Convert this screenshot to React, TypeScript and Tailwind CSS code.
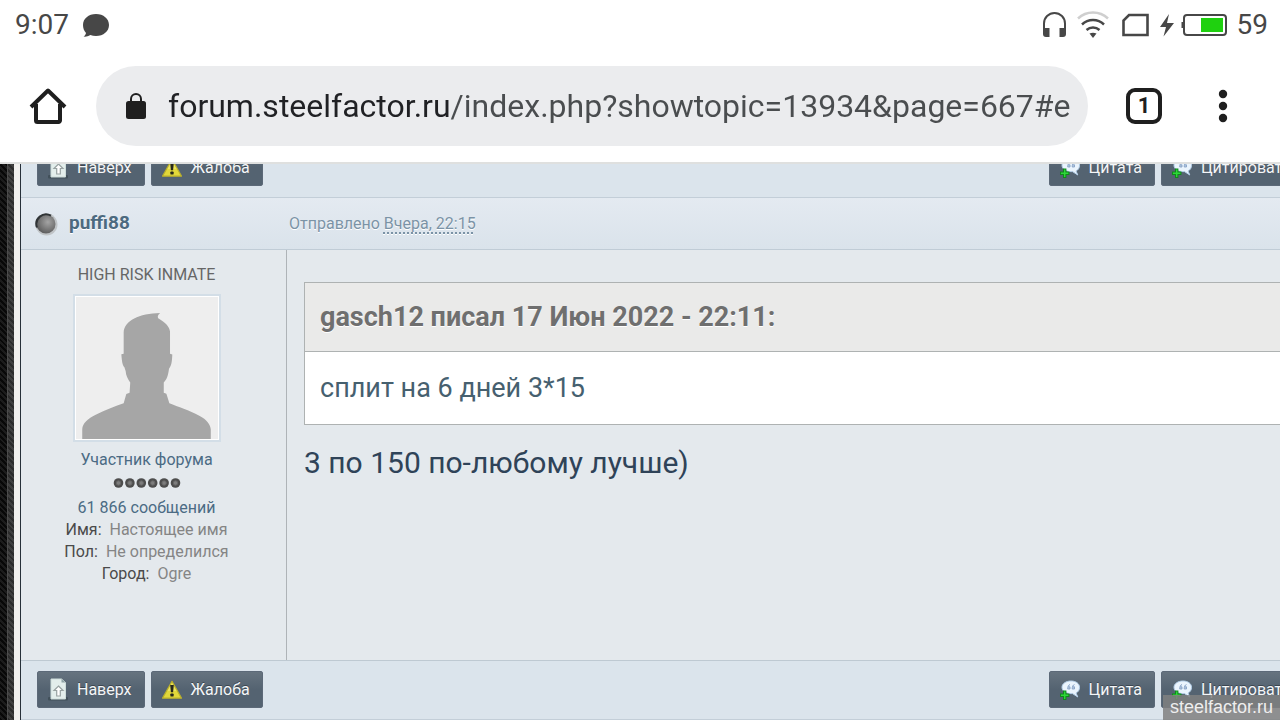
import type { ReactNode } from 'react';

const DocumentUpIcon = () => (
  <svg width="20" height="24" viewBox="0 0 20 24" aria-hidden="true">
    <rect x="0" y="19" width="20" height="3.500" rx="1" fill="#35454b" opacity="0.6" />
    <path d="M3 1h10.500l4 3.500V21H3z" fill="#e3eeec" stroke="#cddcda" strokeWidth="1" />
    <path d="M13.500 1l4 3.500h-4z" fill="#8fa3a6" />
    <path d="M10.500 8l4.500 4.500h-2.700V18H8.700v-5.500H6z" fill="#ffffff" stroke="#98a2a2" strokeWidth="1.200" />
  </svg>
);

const WarningIcon = () => (
  <svg width="20" height="24" viewBox="0 0 22 24" aria-hidden="true">
    <path d="M11 2.500L21.500 21H.5z" fill="#e2d83a" stroke="#b9af2c" strokeWidth="1.300" strokeLinejoin="round" />
    <path d="M11 4L16 13H6z" fill="#f3ec7a" opacity="0.6" />
    <path d="M9 6.500h4l-.8 8H9.800z" fill="#26281c" />
    <rect x="9.200" y="15.800" width="3.600" height="3.400" rx="1" fill="#26281c" />
  </svg>
);

const QuoteIcon = () => (
  <svg width="20" height="24" viewBox="0 0 20 24" aria-hidden="true">
    <path
      d="M11 3c5 0 8.500 2.600 8.500 6.300 0 2.800-1.300 4.700-3.500 5.700l1.800 4-5.300-3.400H11C6 15.600 2 13 2 9.300S6 3 11 3z"
      fill="#eaf4fd"
      stroke="#b4cfe9"
      strokeWidth="1"
    />
    <path
      d="M10 6.500C8.500 7 7.700 8.200 7.700 11H10V8.800H8.500M14.500 6.500c-1.500.5-2.300 1.700-2.300 4.500h2.300V8.800H13"
      fill="#b9cbe2"
      stroke="#7f9cc2"
      strokeWidth="0.8"
    />
    <path d="M3 12.500h3.400v3h3v3.400h-3v3H3v-3H0v-3.400h3z" fill="#0f8a1a" />
    <path d="M4 13.500h1.400v3h3v1.400h-3v3H4v-3H1v-1.400h3z" fill="#2fd63a" />
  </svg>
);

const Avatar = () => (
  <svg className="block h-full w-full" viewBox="0 0 432 432" role="img" aria-label="puffi88">
    <rect width="432" height="432" fill="#eeeeee" />
    <path
      d="M19 432V402C20 384 36 370 60 358C90 343 120 332 145 323L153 295L163 291L165 260C158 250 152 240 151 225L147 213C142 208 140 200 138 174L145 173V108C147 72 192 50 256 49C250 54 247 59 250 65C270 76 284 90 286 105V173L293 175C292 200 290 208 283 218C280 240 276 250 267 260V291L275 294L284 323C310 334 345 344 375 361C398 373 409 388 410 402V432Z"
      fill="#a6a6a6"
    />
  </svg>
);

interface ActionProps {
  icon: ReactNode;
  children: ReactNode;
}

const Action = ({ icon, children }: ActionProps) => (
  <button
    type="button"
    className="flex h-[37px] shrink-0 items-center gap-[9px] rounded-xs border border-[#5c6978] bg-linear-to-b from-[#66737f] to-[#546371] to-50% pr-3 pl-[10px] text-base whitespace-nowrap text-[#f4f6f8] [text-shadow:0_-1px_0_#3c4650]"
  >
    {icon}
    {children}
  </button>
);

const ActionBar = () => (
  <div className="flex items-center gap-[6px] border-b border-[#c3ced8] bg-[#dbe4ec] pt-[10px] pb-[11px] pl-4">
    <Action icon={<DocumentUpIcon />}>Наверх</Action>
    <Action icon={<WarningIcon />}>Жалоба</Action>
    <div className="flex-1" />
    {/* the forum page is wider than the phone, so the last button runs off the edge */}
    <div className="-mr-6 flex gap-[6px]">
      <Action icon={<QuoteIcon />}>Цитата</Action>
      <Action icon={<QuoteIcon />}>Цитировать</Action>
    </div>
  </div>
);

const StatusBar = () => (
  <div className="flex h-[50px] items-center justify-between pr-3 pl-[15px] text-[28px] leading-8 text-[#474747]">
    <div className="flex items-center gap-[13px]">
      <span>9:07</span>
      <svg width="28" height="26" viewBox="0 0 28 26" aria-hidden="true">
        <path
          d="M14 2c7.500 0 13 4.700 13 11s-5.500 11-13 11c-2 0-4-.4-5.700-1C6 24.500 3.500 25 1.500 24.600c1.300-.8 2.300-2 2.500-3.600C2.100 19 1 16.200 1 13 1 6.700 6.500 2 14 2z"
          fill="#474747"
        />
      </svg>
    </div>
    <div className="flex items-center">
      <svg width="186" height="28" viewBox="0 0 186 28" aria-hidden="true">
        {/* headphones */}
        <path d="M2 18V12.500a10.500 10.500 0 0 1 21 0V18" fill="none" stroke="#474747" strokeWidth="2" />
        <path d="M1 17h6.500v9H4a3 3 0 0 1-3-3zM24 17h-6.500v9H21a3 3 0 0 0 3-3z" fill="#474747" />
        {/* wifi */}
        <g fill="none" strokeWidth="2.500">
          <path d="M36 7.500a22 22 0 0 1 30 0" stroke="#cfcfcf" />
          <path d="M40 13.500a16 16 0 0 1 22 0M44.500 19a10 10 0 0 1 13 0" stroke="#474747" />
        </g>
        <path d="M47.500 22.500q3.500-1.600 7 0L51 27z" fill="#474747" />
        {/* sim */}
        <path d="M87 4h18.500v20h-24V9.500z" fill="none" stroke="#474747" strokeWidth="2.600" />
        {/* charge */}
        <path d="M127 3L118 16h6l-2.500 9.500L132 12h-7z" fill="#474747" />
        {/* battery */}
        <rect x="142" y="4" width="42" height="20" rx="3" fill="none" stroke="#474747" strokeWidth="2" />
        <path d="M139.500 11h2v6h-2z" fill="#474747" />
        <rect x="159" y="7" width="22" height="14" fill="#1fd10f" />
      </svg>
      <span className="ml-[9px]">59</span>
    </div>
  </div>
);

const BrowserBar = () => (
  <div className="flex items-center pt-4 pb-4 text-[#1f1f1f]">
    <button type="button" aria-label="Home" className="flex w-24 justify-center">
      <svg width="38" height="40" viewBox="0 0 38 40" fill="none" stroke="currentColor" strokeWidth="4">
        <path d="M7 18v16.500a1.500 1.500 0 0 0 1.500 1.500h21a1.500 1.500 0 0 0 1.500-1.500V18" />
        <path d="M2 21L19 4.500 36 21" strokeLinejoin="round" />
      </svg>
    </button>
    <div className="flex h-20 min-w-0 flex-1 items-center gap-[22px] rounded-full bg-[#ebecee] pr-4 pl-[30px]">
      <svg width="20" height="28" viewBox="0 0 20 28" className="shrink-0" aria-hidden="true">
        <rect y="9" width="20" height="18" rx="2.500" fill="#1f1f1f" />
        <path d="M5 10V7a5 5 0 0 1 10 0v3" fill="none" stroke="#1f1f1f" strokeWidth="2" />
      </svg>
      {/* host is darker than the path */}
      <input
        type="text"
        aria-label="Address"
        defaultValue="forum.steelfactor.ru/index.php?showtopic=13934&page=667#e"
        className="h-[50px] min-w-0 flex-1 bg-[linear-gradient(90deg,#202124_282px,#4a4d4f_282px)] bg-clip-text text-[32px] text-transparent outline-none"
      />
    </div>
    <button type="button" aria-label="Tabs" className="ml-[38px] flex size-9 items-center justify-center rounded-[9px] border-4 border-[#1f1f1f] text-[22px] leading-6 font-bold">
      1
    </button>
    <button type="button" aria-label="Menu" className="flex w-[118px] justify-center pl-1">
      <svg width="10" height="34" viewBox="0 0 10 34" fill="currentColor">
        <circle cx="5" cy="5" r="4.200" />
        <circle cx="5" cy="17" r="4.200" />
        <circle cx="5" cy="29" r="4.200" />
      </svg>
    </button>
  </div>
);

const fields = [
  { label: 'Имя:', value: 'Настоящее имя' },
  { label: 'Пол:', value: 'Не определился' },
  { label: 'Город:', value: 'Ogre' },
];

const Author = () => (
  <aside className="flex w-[266px] shrink-0 flex-col items-center border-r border-[#aeb3b7] pt-[14px] pr-[14px] text-base leading-[22px]">
    <p className="text-[#666666]">HIGH RISK INMATE</p>
    <div className="mt-2 size-[148px] border-2 border-[#d3dee7] bg-white p-px">
      <Avatar />
    </div>
    <p className="mt-[7px] text-[#4b6b84]">Участник форума</p>
    <svg width="68" height="12" viewBox="0 0 68 12" className="mt-[6px] mb-2" aria-hidden="true">
      {[0, 1, 2, 3, 4, 5].map((i) => (
        <g key={i}>
          <circle cx={5.5 + i * 11.4} cy="6" r="4.800" fill="#4d4d4d" />
          <circle cx={5.5 + i * 11.4} cy="6" r="2.200" fill="#7d7d7d" stroke="#676767" />
        </g>
      ))}
    </svg>
    <p className="text-[#4b6b84]">61 866 сообщений</p>
    {fields.map((field) => (
      <p key={field.label} className="flex gap-2">
        <span className="text-[#4a4a4a]">{field.label}</span>
        <span className="text-[#858585]">{field.value}</span>
      </p>
    ))}
  </aside>
);

const Post = () => (
  <article className="flex flex-1 flex-col">
    <header className="flex h-[52px] items-center border-b border-[#c0ccd6] bg-linear-to-b from-[#e4eaf1] to-[#dae3eb] pl-[13px] [text-shadow:0_1px_0_#ffffff]">
      <svg width="24" height="24" viewBox="0 0 24 24" aria-hidden="true">
        <defs>
          <radialGradient id="offline" cx="0.6" cy="0.4" r="0.6">
            <stop offset="0" stopColor="#a4a4a4" />
            <stop offset="1" stopColor="#606060" />
          </radialGradient>
        </defs>
        <circle cx="12.500" cy="12.500" r="11" fill="#c0c4c7" />
        <circle cx="12" cy="12" r="9.500" fill="url(#offline)" />
        <path d="M3 15.500A9.700 9.700 0 0 1 17 3.700" fill="none" stroke="#303436" strokeWidth="2" />
      </svg>
      <a href="#puffi88" className="ml-[11px] w-[220px] text-[19px] font-bold text-[#4c6a7f]">
        puffi88
      </a>
      <p className="text-base text-[#7b93a6]">
        Отправлено{' '}
        <a href="#post" className="underline decoration-dotted decoration-2 underline-offset-4">
          Вчера, 22:15
        </a>
      </p>
    </header>
    <div className="flex flex-1 bg-[#e4e9ed]">
      <Author />
      <div className="min-w-0 flex-1 pt-8 pl-[17px]">
        <blockquote className="border-y border-l border-[#aeb2b2]">
          <p className="border-b border-[#aeb2b2] bg-[#eaeae9] px-[15px] py-4 text-[27px] leading-9 font-bold text-[#6f6f6f] [text-shadow:0_1px_0_#ffffff]">
            gasch12 писал 17 Июн 2022 - 22:11:
          </p>
          <p className="bg-white px-[15px] py-[18px] text-[27px] leading-9 text-[#46606f]">сплит на 6 дней 3*15</p>
        </blockquote>
        <p className="mt-5 text-[30px] leading-9 text-[#2f4358]">3 по 150 по-любому лучше)</p>
      </div>
    </div>
  </article>
);

const App = () => {
  return (
    <div className="relative flex min-h-screen flex-col overflow-hidden bg-white font-['Roboto','Noto_Sans',sans-serif]">
      <StatusBar />
      <BrowserBar />
      <main className="flex flex-1 border-t-2 border-[#dfe0df]">
        <div className="w-[7px] shrink-0 bg-[repeating-linear-gradient(45deg,#080808_0_2px,#1c1c1c_2px_4px)]" />
        <div className="w-[7px] shrink-0 border-l border-[#4c4c4c] bg-[repeating-linear-gradient(45deg,#2c2c2c_0_2px,#404040_2px_4px)]" />
        <div className="w-[6px] shrink-0 bg-[#f1f0ee]" />
        <div className="flex min-w-0 flex-1 flex-col border-l border-[#273039]">
          <div className="flex h-[34px] flex-col justify-end overflow-hidden">
            <ActionBar />
          </div>
          <Post />
          <div className="border-t border-[#bec9d2]">
            <ActionBar />
          </div>
        </div>
      </main>
      <div className="absolute right-0 bottom-0 bg-[#808080]/85 px-[7px] font-['Liberation_Sans',sans-serif] text-lg leading-[25px] text-[#eeeeee]">
        steelfactor.ru
      </div>
    </div>
  );
};

export default App;
